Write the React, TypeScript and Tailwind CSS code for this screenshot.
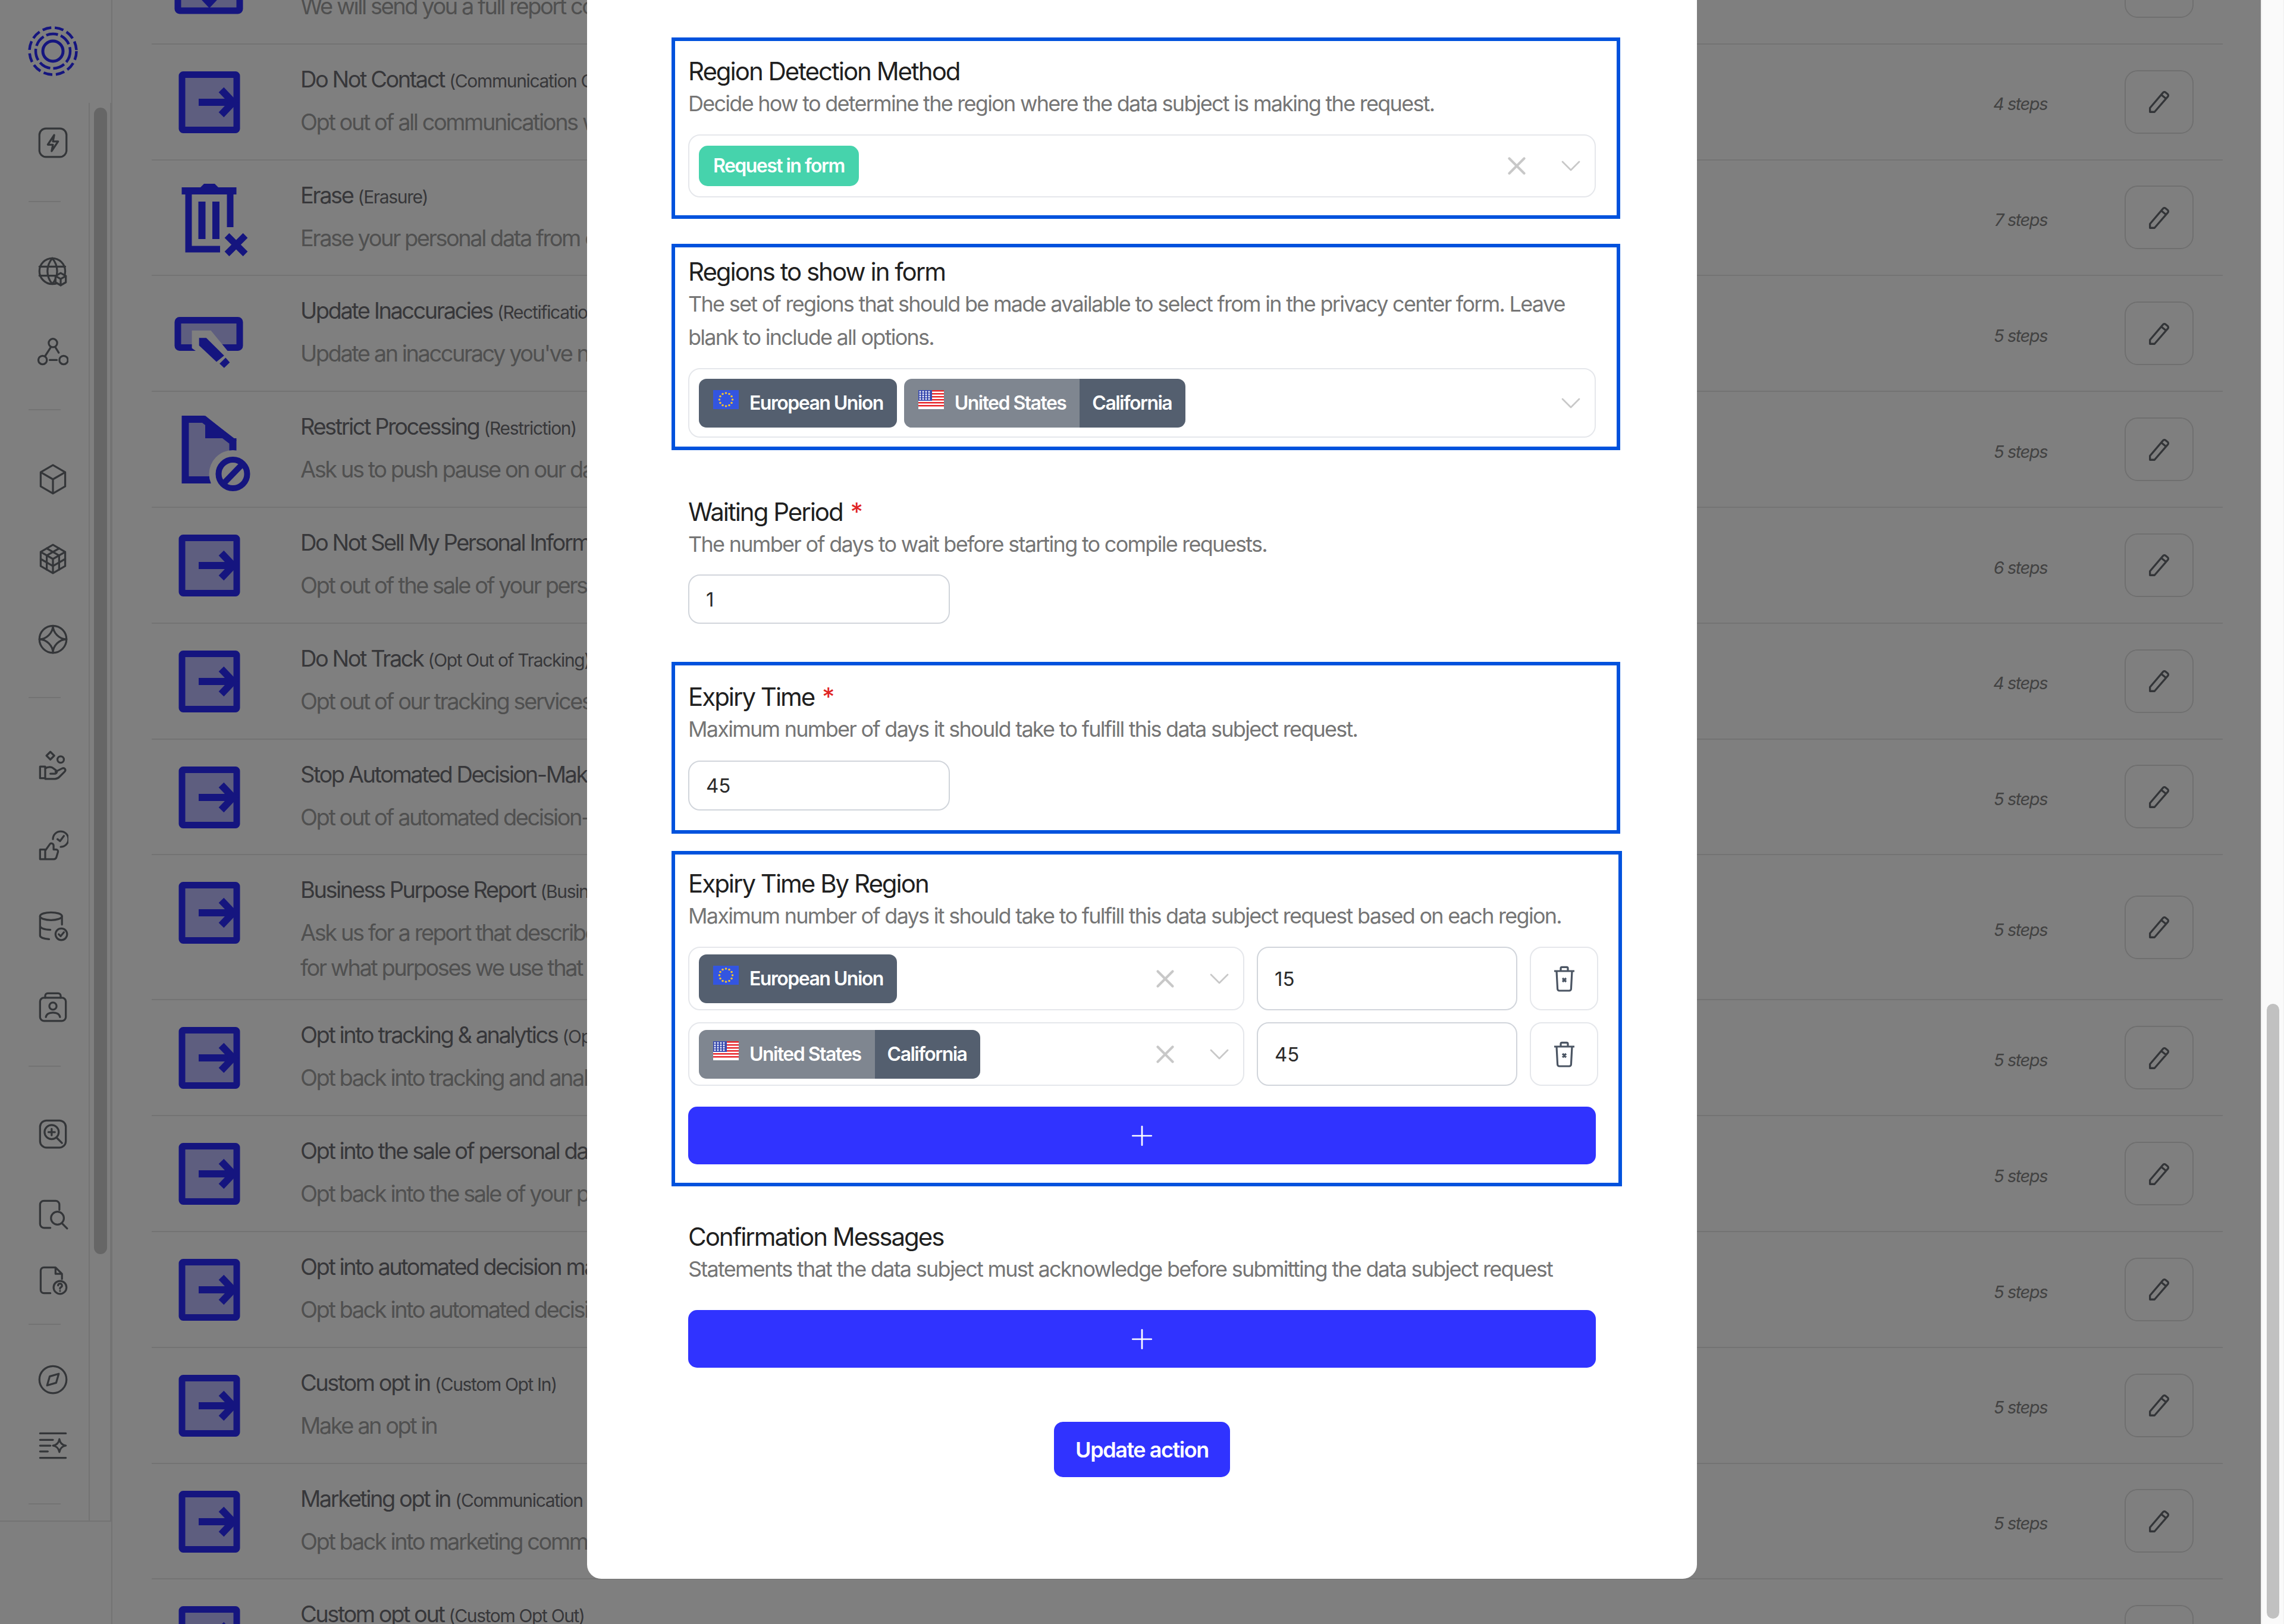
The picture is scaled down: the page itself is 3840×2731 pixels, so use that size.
import { ChevronDown, Plus, X } from "lucide-react"
import type { ReactNode } from "react"

type Row = {
  title: string
  tag: string
  desc: string
  desc2?: string
  steps?: number
  icon: ReactNode
  tall?: boolean
}

const STROKE = "#2a2aff"
const TINT = "#bdbdff"

function ArrowIcon() {
  return (
    <svg viewBox="0 0 140 130" className="w-[140px] h-[130px] shrink-0 overflow-visible">
      <rect x="24" y="18.5" width="92" height="93" rx="2" fill={TINT} stroke={STROKE} strokeWidth="11" />
      <path d="M52 65h58" stroke={STROKE} strokeWidth="12" fill="none" />
      <path d="M90 44l20 21-20 21" stroke={STROKE} strokeWidth="12" fill="none" />
    </svg>
  )
}

function ReportIcon() {
  return (
    <svg viewBox="0 0 140 130" className="w-[140px] h-[130px] shrink-0 overflow-visible">
      <rect x="17" y="40" width="104" height="66" rx="3" fill={TINT} stroke={STROKE} strokeWidth="11" />
      <path d="M70 50v40M56 78l14 15 14-15" stroke={STROKE} strokeWidth="12" fill="none" />
    </svg>
  )
}

function TrashIcon() {
  return (
    <svg viewBox="0 0 140 130" className="w-[140px] h-[130px] shrink-0 overflow-visible">
      <path d="M23.5 13H55l6-6h18l6 6h30.500v12h-92z" fill={STROKE} />
      <path d="M35 25v92h53M105 25v55" stroke={STROKE} strokeWidth="11" fill="none" />
      <path d="M57.500 37v63M81 37v63" stroke={STROKE} strokeWidth="12" fill="none" />
      <path d="M100 99l31 31M131 99l-31 31" stroke={STROKE} strokeWidth="11" fill="none" transform="translate(-.5 -5)" />
    </svg>
  )
}

function UpdateIcon() {
  return (
    <svg viewBox="0 0 140 130" className="w-[140px] h-[130px] shrink-0 overflow-visible">
      <rect x="17" y="42.500" width="104" height="46" rx="3" fill={TINT} stroke={STROKE} strokeWidth="11" />
      <path d="M40.600 59.700H72.500L108.800 103.900 89.700 124 40.600 89.500z" fill="#ffffff" />
      <path d="M52.700 72.300H64.800L94.800 102.100 82 112.500 52.700 85z" fill={STROKE} />
      <path d="M97.300 105.600l7 8-9.500 9.200-7.700-7.400z" fill={STROKE} />
    </svg>
  )
}

function RestrictIcon() {
  return (
    <svg viewBox="0 0 140 130" className="w-[140px] h-[130px] shrink-0 overflow-visible">
      <path d="M29.500 14H60L109.500 52V116H29.500z" fill={TINT} stroke={STROKE} strokeWidth="12" />
      <path d="M63 8L115.500 50V46H63z" fill={STROKE} />
      <circle cx="109.500" cy="106" r="40" fill="#ffffff" />
      <circle cx="109.500" cy="106" r="24" fill="none" stroke={STROKE} strokeWidth="10" />
      <path d="M94 122l31-32" stroke={STROKE} strokeWidth="10" />
    </svg>
  )
}

const rows: Row[] = [
  { title: "Access your data", tag: "(Access)", desc: "We will send you a full report containing your data", icon: <ReportIcon /> },
  { title: "Do Not Contact", tag: "(Communication Opt Out)", desc: "Opt out of all communications with us", steps: 4, icon: <ArrowIcon /> },
  { title: "Erase", tag: "(Erasure)", desc: "Erase your personal data from our systems", steps: 7, icon: <TrashIcon /> },
  { title: "Update Inaccuracies", tag: "(Rectification)", desc: "Update an inaccuracy you've noticed", steps: 5, icon: <UpdateIcon /> },
  { title: "Restrict Processing", tag: "(Restriction)", desc: "Ask us to push pause on our data processing", steps: 5, icon: <RestrictIcon /> },
  { title: "Do Not Sell My Personal Information", tag: "(Sale Opt Out)", desc: "Opt out of the sale of your personal data", steps: 6, icon: <ArrowIcon /> },
  { title: "Do Not Track", tag: "(Opt Out of Tracking)", desc: "Opt out of our tracking services", steps: 4, icon: <ArrowIcon /> },
  { title: "Stop Automated Decision-Making", tag: "(Automated Decisions)", desc: "Opt out of automated decision-making", steps: 5, icon: <ArrowIcon /> },
  { title: "Business Purpose Report", tag: "(Business Purpose)", desc: "Ask us for a report that describes how", desc2: "for what purposes we use that data", steps: 5, icon: <ArrowIcon />, tall: true },
  { title: "Opt into tracking & analytics", tag: "(Opt In)", desc: "Opt back into tracking and analytics", steps: 5, icon: <ArrowIcon /> },
  { title: "Opt into the sale of personal data", tag: "(Sale Opt In)", desc: "Opt back into the sale of your personal data", steps: 5, icon: <ArrowIcon /> },
  { title: "Opt into automated decision making", tag: "(Opt In)", desc: "Opt back into automated decision-making", steps: 5, icon: <ArrowIcon /> },
  { title: "Custom opt in", tag: "(Custom Opt In)", desc: "Make an opt in", steps: 5, icon: <ArrowIcon /> },
  { title: "Marketing opt in", tag: "(Communication Opt In)", desc: "Opt back into marketing communications", steps: 5, icon: <ArrowIcon /> },
  { title: "Custom opt out", tag: "(Custom Opt Out)", desc: "Make an opt out", steps: 5, icon: <ArrowIcon /> },
]

function NavIcon({ children }: { children: ReactNode }) {
  return (
    <svg viewBox="0 0 24 24" fill="none" stroke="#686c72" strokeWidth="1.5" strokeLinecap="round" strokeLinejoin="round" className="w-[52px] h-[52px]">
      {children}
    </svg>
  )
}

function Divider({ className }: { className: string }) {
  return <div className={`ml-[48px] w-[54px] h-[2px] bg-[#e6e6e6] ${className}`} />
}

function Sidebar() {
  return (
    <aside className="relative w-[189px] h-full shrink-0 border-r-2 border-[#e6e6e6]">
      <div className="absolute left-[149px] top-[173px] w-[2px] h-[2385px] bg-[#e6e6e6]" />
      <div className="absolute left-[185px] top-[173px] w-[2px] h-[2385px] bg-[#e6e6e6]" />
      <div className="absolute left-0 top-[2557px] w-[187px] h-[2px] bg-[#e6e6e6]" />
      <div className="absolute left-[158px] top-[181px] w-[22px] h-[1928px] rounded-full bg-[#cdcdcd]" />
      <div className="flex flex-col">
        <svg viewBox="0 0 84 84" fill="none" stroke={STROKE} className="ml-[47px] mt-[44px] w-[84px] h-[84px]">
          <circle cx="42" cy="42" r="39.500" strokeWidth="4.500" strokeDasharray="15 6" />
          <circle cx="42" cy="42" r="29" strokeWidth="4.500" strokeDasharray="20 5" />
          <circle cx="42" cy="42" r="17" strokeWidth="5" />
        </svg>
        <div className="ml-[63px] mt-[86px]">
          <NavIcon>
            <rect x="1.500" y="1" width="21" height="22" rx="5" />
            <path d="M13 6 8 13.500h4l-1 5 5-7.500h-4z" />
          </NavIcon>
        </div>
        <Divider className="mt-[72px]" />
        <div className="ml-[63px] mt-[91px]">
          <NavIcon>
            <circle cx="11.500" cy="11.500" r="10" />
            <path d="M1.500 8h20M1.500 15h20M11.500 1.500c-5 6-5 14 0 20M11.500 1.500c5 6 5 14 0 20" />
            <path d="M18 13l4 2.300v4.900L18 22.500l-4-2.300v-4.900z" fill="#ffffff" />
            <path d="M14 15.300l4 2.300 4-2.300M18 17.600v4.900" />
          </NavIcon>
        </div>
        <div className="ml-[63px] mt-[83px]">
          <NavIcon>
            <circle cx="12" cy="5" r="3.300" />
            <circle cx="4" cy="18.200" r="3.300" />
            <circle cx="20.300" cy="18.200" r="3.300" />
            <path d="M10.500 8l-4.500 7M14 8.500l2.500 4M9.500 18.200H15" />
          </NavIcon>
        </div>
        <Divider className="mt-[70px]" />
        <div className="ml-[63px] mt-[90px]">
          <NavIcon>
            <path d="M12 1 21.500 6.500v11L12 23l-9.500-5.500v-11zM2.500 6.500 12 12l9.500-5.500M12 12v11" />
          </NavIcon>
        </div>
        <div className="ml-[63px] mt-[82px]">
          <NavIcon>
            <path d="M12 1 21.500 6.500v11L12 23l-9.500-5.500v-11zM2.500 6.500 12 12l9.500-5.500M12 12v11" />
            <path d="M7.200 3.800 16.800 9.300v11M16.800 3.800 7.200 9.300v11M2.500 12 12 17.500 21.500 12" />
          </NavIcon>
        </div>
        <div className="ml-[63px] mt-[83px]">
          <NavIcon>
            <circle cx="12" cy="12" r="10.500" />
            <path d="M12 1.500C12 7 7 12 1.500 12M12 1.500C12 7 17 12 22.500 12M1.500 12C7 12 12 17 12 22.500M22.500 12C17 12 12 17 12 22.500" />
          </NavIcon>
        </div>
        <Divider className="mt-[71px]" />
        <div className="ml-[63px] mt-[87px]">
          <NavIcon>
            <path d="M10 1.500l3 3-3 3-3-3z" />
            <circle cx="18" cy="7.500" r="2.500" />
            <path d="M2 13h4v9H2zM6 14.500c2-1.500 5-1.500 6.500 0l2 1.500c1 .8.500 2.500-1 2.500H10M14 17l5-2.500c2-1 3.500 1 2 2.500l-4 4c-1 1-2 1.500-3.500 1.500H6" />
          </NavIcon>
        </div>
        <div className="ml-[63px] mt-[83px]">
          <NavIcon>
            <path d="M2 15h4v7.500H2zM6 16l3.500-5c1-1.500 3-.5 3 1v3h2c1 0 1.700 1 1.400 2l-1.200 4c-.3 1-1 1.500-2 1.500H6" />
            <path d="M12 7a6 6 0 1 1 6 6" />
            <path d="M15.500 7l2 1.500 3-4" />
          </NavIcon>
        </div>
        <div className="ml-[63px] mt-[83px]">
          <NavIcon>
            <ellipse cx="10.500" cy="4.500" rx="8.500" ry="3" />
            <path d="M2 4.500v15c0 1.500 3 2.500 7 2.800M19 4.500V11M2 12c0 1.500 3 3 8 3" />
            <circle cx="18.500" cy="18.500" r="4.500" />
            <path d="M16.500 18.500l1.500 1.500 2.500-3" />
          </NavIcon>
        </div>
        <div className="ml-[63px] mt-[84px]">
          <NavIcon>
            <rect x="2" y="5" width="20" height="18" rx="3" />
            <path d="M6 5V3.500c0-1 .8-2 2-2h8c1.200 0 2 1 2 2V5" />
            <circle cx="12" cy="11.500" r="2.800" />
            <path d="M6.500 20c.5-2.500 3-3.500 5.500-3.500s5 1 5.500 3.500" />
          </NavIcon>
        </div>
        <Divider className="mt-[73px]" />
        <div className="ml-[63px] mt-[87px]">
          <NavIcon>
            <rect x="2" y="1.500" width="20" height="21" rx="5" />
            <circle cx="11" cy="10.500" r="5.500" />
            <path d="M15 15l4 4M11 8v5M8.500 10.500h5" />
          </NavIcon>
        </div>
        <div className="ml-[63px] mt-[83px]">
          <NavIcon>
            <path d="M10 22.500H5a3 3 0 0 1-3-3v-15a3 3 0 0 1 3-3h9a3 3 0 0 1 3 3v4" />
            <circle cx="15.500" cy="15" r="5" />
            <path d="M19 19l4 4" />
          </NavIcon>
        </div>
        <div className="ml-[63px] mt-[59px]">
          <NavIcon>
            <path d="M10 22H5a2.500 2.500 0 0 1-2.500-2.500v-15A2.500 2.500 0 0 1 5 2h9l5 5v4M14 2v5h5" />
            <circle cx="17.500" cy="17.500" r="5" />
            <path d="M16 16a1.500 1.500 0 1 1 2 1.500c-.5.2-.5.5-.5 1M17.500 20.200v.1" />
          </NavIcon>
        </div>
        <Divider className="mt-[47px]" />
        <div className="ml-[63px] mt-[66px]">
          <NavIcon>
            <circle cx="12" cy="12" r="10.500" />
            <path d="M16.500 7.500 14.500 14.500 7.500 16.500 9.500 9.500z" />
          </NavIcon>
        </div>
        <div className="ml-[63px] mt-[59px]">
          <NavIcon>
            <path d="M2 2.500h20M2 7.500h10M2 12h8M2 16.500h6M2 21.500h20" />
            <path d="M17 7c.5 3 2 4.500 5 5-3 .5-4.500 2-5 5-.5-3-2-4.500-5-5 3-.5 4.500-2 5-5z" />
          </NavIcon>
        </div>
        <Divider className="mt-[71px]" />
      </div>
    </aside>
  )
}

function ActionRow({ row }: { row: Row }) {
  return (
    <div className={`flex border-b-2 border-[#e6e6e6] ${row.tall ? "h-[244px]" : "h-[194.8px]"}`}>
      <div className="pl-[26.5px] pt-[32px] shrink-0">{row.icon}</div>
      <div className="ml-[83.5px] pt-[30px] flex-1 min-w-0">
        <div className="leading-[56px] text-[38px] tracking-[-0.065em] text-[#6f6f74] whitespace-nowrap">
          {row.title} <span className="text-[30px] tracking-[-0.045em]">{row.tag}</span>
        </div>
        <div className="mt-[12px] leading-[59px] text-[38px] tracking-[-0.065em] text-[#a0a0a0] whitespace-nowrap">
          <div>{row.desc}</div>
          {row.desc2 && <div>{row.desc2}</div>}
        </div>
      </div>
      <div className="flex items-center pr-[49px] shrink-0">
        <span className="mt-[8px] text-[29px] italic tracking-[-0.05em] text-[#858585]">{row.steps} steps</span>
        <div className="ml-[130px] w-[116px] h-[107px] rounded-[22px] border-[2.5px] border-[#dedede] flex items-center justify-center">
          <svg viewBox="0 0 24 24" fill="none" stroke="#666a70" strokeWidth="1.7" strokeLinejoin="round" className="w-[46px] h-[46px]">
            <path d="M4 21v-3.500L15.500 4a1.500 1.500 0 0 1 2.100-.2l1.900 1.600a1.500 1.500 0 0 1 .2 2.100L8 21zM14 6l4.500 3.700" />
          </svg>
        </div>
      </div>
    </div>
  )
}

function Field({ label, required, help, help2 }: { label: string; required?: boolean; help: string; help2?: string }) {
  return (
    <div>
      <div className="leading-[56px] text-[42px] tracking-[-0.048em] text-[#1f1f1f]">
        {label}
        {required && <span className="ml-[13px] text-[#e02424]">*</span>}
      </div>
      <div className="-mt-[2px] leading-[56px] text-[36px] tracking-[-0.048em] text-[#757575] whitespace-nowrap">
        <div>{help}</div>
        {help2 && <div>{help2}</div>}
      </div>
    </div>
  )
}

function EuFlag() {
  return (
    <svg viewBox="0 0 43 32" className="w-[43px] h-[32px] mb-[12px] shrink-0">
      <rect width="43" height="32" fill="#3355e0" />
      {[0, 30, 60, 90, 120, 150, 180, 210, 240, 270, 300, 330].map((a) => (
        <circle key={a} cx={21.5 + 11 * Math.cos((a * Math.PI) / 180)} cy={16 + 11 * Math.sin((a * Math.PI) / 180)} r="1.800" fill="#f2c230" />
      ))}
    </svg>
  )
}

function UsFlag() {
  return (
    <svg viewBox="0 0 43 32" className="w-[43px] h-[32px] mb-[12px] shrink-0">
      <rect width="43" height="32" fill="#ffffff" />
      {[0, 5, 10, 15, 20, 25].map((y) => (
        <rect key={y} y={y} width="43" height="2.500" fill="#e8262b" />
      ))}
      <rect width="23" height="18" fill="#3a4cb0" />
      {[3, 7, 11, 15].map((y) =>
        [3, 8, 13, 18].map((x) => <circle key={`${x}-${y}`} cx={x} cy={y} r="1.400" fill="#ffffff" />)
      )}
    </svg>
  )
}

function EuTag() {
  return (
    <div className="h-[82px] rounded-[13px] bg-[#545f6f] flex items-center pl-[24px] pr-[23px] text-white text-[32px] font-semibold tracking-[-0.048em]">
      <EuFlag />
      <span className="ml-[18px]">European Union</span>
    </div>
  )
}

function UsTag() {
  return (
    <div className="h-[82px] rounded-[13px] overflow-hidden flex text-white text-[32px] font-semibold tracking-[-0.048em]">
      <div className="bg-[#7f8690] flex items-center pl-[24px] pr-[23px]">
        <UsFlag />
        <span className="ml-[18px]">United States</span>
      </div>
      <div className="bg-[#545f6f] flex items-center pl-[21px] pr-[23px]">California</div>
    </div>
  )
}

function SelectBox({ children, clear, height }: { children: ReactNode; clear?: boolean; height: string }) {
  return (
    <div className={`flex items-center justify-between rounded-[20px] border-[2.5px] border-[#e5e7eb] bg-white pl-[16px] pr-[12px] ${height}`}>
      <div className="flex gap-[12px]">{children}</div>
      <div className="flex items-center gap-[38px] text-[#c8c8c8]">
        {clear && <X size={50} strokeWidth={2} />}
        <ChevronDown size={56} strokeWidth={1.2} />
      </div>
    </div>
  )
}

function NumberInput({ value, className }: { value: string; className: string }) {
  return (
    <input
      readOnly
      value={value}
      className={`rounded-[20px] border-[2.5px] border-[#d1d5db] bg-white pl-[28px] text-[33px] text-[#2b2b2b] outline-none ${className}`}
    />
  )
}

function AddButton({ className }: { className: string }) {
  return (
    <div className={`h-[97px] rounded-[15px] bg-[#3033ff] flex items-center justify-center text-white ${className}`}>
      <Plus size={54} strokeWidth={1.2} />
    </div>
  )
}

function TrashButton() {
  return (
    <div className="w-[115px] h-[107px] shrink-0 rounded-[20px] border-[2.5px] border-[#e5e7eb] flex items-center justify-center">
      <svg viewBox="0 0 24 24" fill="none" stroke="#4b5563" strokeWidth="1.6" strokeLinejoin="round" className="w-[48px] h-[48px]">
        <path d="M3.500 5.500h17M9 5.500V3.200c0-.6.4-1 1-1h4c.6 0 1 .4 1 1v2.300M5.500 5.500l.8 15c0 .8.700 1.500 1.500 1.500h8.400c.8 0 1.500-.7 1.500-1.500l.8-15M10.500 11.500l3 3M13.500 11.500l-3 3" />
      </svg>
    </div>
  )
}

function Modal() {
  return (
    <div className="absolute left-[987px] top-[-40px] w-[1866px] rounded-[24px] bg-white pt-[103px] pb-[171px] pl-[170px]">
      <div className="w-[1526px]">
        <div className="-ml-[28px] -mr-[41px] border-[6px] border-[#0052dd] pl-[22px] pr-[35px] pt-[23px] pb-[30px]">
          <Field label="Region Detection Method" help="Decide how to determine the region where the data subject is making the request." />
          <div className="mt-[24px]">
            <SelectBox clear height="h-[106px]">
              <div className="h-[68px] rounded-[15px] bg-[#46d3ac] flex items-center px-[24px] text-white text-[32px] font-semibold tracking-[-0.048em]">Request in form</div>
            </SelectBox>
          </div>
        </div>

        <div className="mt-[42px] -ml-[28px] -mr-[41px] border-[6px] border-[#0052dd] pl-[22px] pr-[35px] pt-[13px] pb-[15px]">
          <Field
            label="Regions to show in form"
            help="The set of regions that should be made available to select from in the privacy center form. Leave"
            help2="blank to include all options."
          />
          <div className="mt-[24px]">
            <SelectBox height="h-[117px]">
              <EuTag />
              <UsTag />
            </SelectBox>
          </div>
        </div>

        <div className="mt-[76px]">
          <Field label="Waiting Period" required help="The number of days to wait before starting to compile requests." />
          <NumberInput value="1" className="mt-[23px] block w-[440px] h-[83px]" />
        </div>

        <div className="mt-[64px] -ml-[28px] -mr-[41px] border-[6px] border-[#0052dd] pl-[22px] pr-[35px] pt-[25px] pb-[33px]">
          <Field label="Expiry Time" required help="Maximum number of days it should take to fulfill this data subject request." />
          <NumberInput value="45" className="mt-[25px] block w-[440px] h-[84px]" />
        </div>

        <div className="mt-[29px] -ml-[28px] -mr-[44px] border-[6px] border-[#0052dd] pl-[22px] pr-[38px] pt-[21px] pb-[31px]">
          <Field label="Expiry Time By Region" help="Maximum number of days it should take to fulfill this data subject request based on each region." />
          <div className="mt-[24px] flex items-stretch gap-[21px] w-[1530px]">
            <div className="w-[935px] shrink-0">
              <SelectBox clear height="h-[107px]">
                <EuTag />
              </SelectBox>
            </div>
            <NumberInput value="15" className="w-[438px] h-[107px]" />
            <TrashButton />
          </div>
          <div className="mt-[20px] flex items-stretch gap-[21px] w-[1530px]">
            <div className="w-[935px] shrink-0">
              <SelectBox clear height="h-[107px]">
                <UsTag />
              </SelectBox>
            </div>
            <NumberInput value="45" className="w-[438px] h-[107px]" />
            <TrashButton />
          </div>
          <AddButton className="mt-[35px]" />
        </div>

        <div className="mt-[57px]">
          <Field label="Confirmation Messages" help="Statements that the data subject must acknowledge before submitting the data subject request" />
          <AddButton className="mt-[41px]" />
        </div>

        <div className="mt-[91px] flex justify-center">
          <div className="w-[296px] h-[93px] rounded-[15px] bg-[#3033ff] flex items-center justify-center text-white text-[36px] font-semibold tracking-[-0.04em]">Update action</div>
        </div>
      </div>
    </div>
  )
}

export default function App() {
  return (
    <div className="relative w-[3840px] h-[2731px] overflow-hidden bg-white [font-family:Inter,'Noto_Sans',sans-serif]">
      <div className="relative w-[3801px] h-full flex">
        <Sidebar />
        <main className="flex-1 min-w-0 pl-[66px] pr-[64px] -mt-[120px]">
          {rows.map((row) => (
            <ActionRow key={row.title} row={row} />
          ))}
        </main>
        <div className="absolute inset-0 bg-black/50" />
      </div>
      <div className="absolute left-[3801px] top-0 w-[39px] h-full bg-[#fafafa] border-l-2 border-r border-[#efefef]">
        <div className="absolute left-[8px] top-[1688px] w-[21px] h-[1034px] rounded-full bg-[#c1c1c1]" />
      </div>
      <Modal />
    </div>
  )
}
